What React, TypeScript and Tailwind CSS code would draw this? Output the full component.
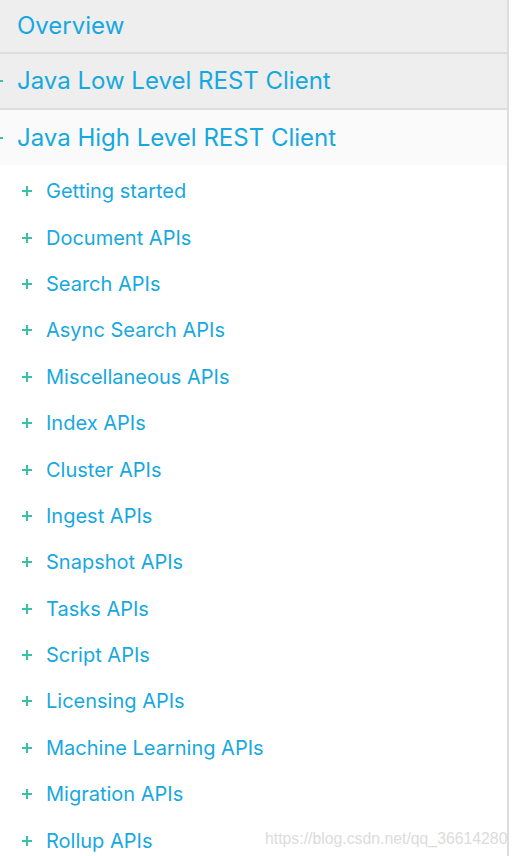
import React from 'react';

const sections = [
  'Getting started',
  'Document APIs',
  'Search APIs',
  'Async Search APIs',
  'Miscellaneous APIs',
  'Index APIs',
  'Cluster APIs',
  'Ingest APIs',
  'Snapshot APIs',
  'Tasks APIs',
  'Script APIs',
  'Licensing APIs',
  'Machine Learning APIs',
  'Migration APIs',
  'Rollup APIs',
];

function Plus({ className }: { className?: string }) {
  return (
    <svg viewBox="0 0 10 10" className={className} fill="none" stroke="#3cbfa6" strokeWidth="2.1">
      <path d="M5 0v10M0 5h10" />
    </svg>
  );
}

function Header({ label, bg, marker }: { label: string; bg: string; marker?: boolean }) {
  return (
    <div className={`relative flex items-center overflow-hidden ${bg}`}>
      {marker && <Plus className="absolute left-[-7px] top-1/2 h-[10px] w-[10px] -translate-y-1/2" />}
      <span className="pl-[17px] text-[24px] text-[#17a8e0]">{label}</span>
    </div>
  );
}

export default function App() {
  return (
    <div
      className="relative h-[856px] w-[517px] overflow-hidden bg-white"
      style={{ fontFamily: 'Inter, "Noto Sans", sans-serif' }}
    >
      <div className="flex h-full w-[509px] flex-col border-r-2 border-[#dddddd]">
        {/* top level entries */}
        <div className="grid grid-rows-[52px_54px_55px] gap-y-[2px] bg-[#dddddd]">
          <Header label="Overview" bg="bg-[#eeeeee]" />
          <Header label="Java Low Level REST Client" bg="bg-[#eeeeee]" marker />
          <Header label="Java High Level REST Client" bg="bg-[#fafafa]" marker />
        </div>

        {/* sub sections */}
        <ul className="pt-[3px]">
          {sections.map((s) => (
            <li key={s} className="flex h-[46.4px] items-center">
              <Plus className="ml-[22px] h-[10px] w-[10px]" />
              <span className="ml-[14px] text-[20px] text-[#17a8e0]">{s}</span>
            </li>
          ))}
        </ul>
      </div>

      {/* watermark */}
      <div
        className="absolute left-[265px] top-[827px] text-[15.8px] text-[#dcdcdc]"
        style={{ fontFamily: '"Liberation Sans", Arial, sans-serif' }}
      >
        https://blog.csdn.net/qq_36614280
      </div>
    </div>
  );
}
